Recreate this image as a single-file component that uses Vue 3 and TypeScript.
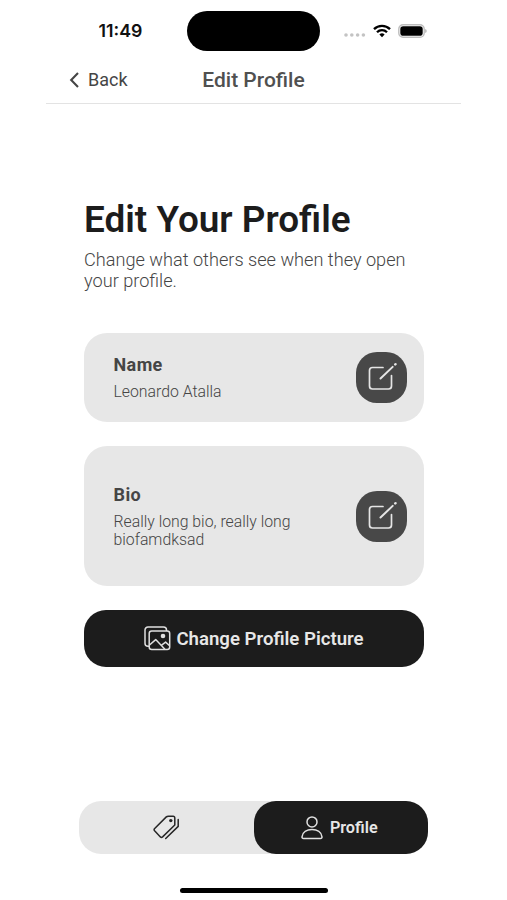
<script setup lang="ts">
interface Field {
  label: string
  value: string
  size: string
}

const fields: Field[] = [
  { label: 'Name', value: 'Leonardo Atalla', size: 'short' },
  { label: 'Bio', value: 'Really long bio, really long biofamdksad', size: 'tall' },
]
</script>

<template>
  <div class="screen">
    <header class="status">
      <div class="time">11:49</div>
      <div class="island"></div>
      <div class="indicators">
        <svg class="dots" width="22" height="4" viewBox="0 0 22 4" fill="#c3c3c3">
          <circle cx="2" cy="2" r="1.8" /><circle cx="7.8" cy="2" r="1.8" />
          <circle cx="13.6" cy="2" r="1.8" /><circle cx="19.4" cy="2" r="1.8" />
        </svg>
        <svg class="wifi" width="18" height="14" viewBox="0 0 18 14" fill="none" stroke="#000" stroke-width="2.3">
          <path d="M1 5.1a11.3 11.3 0 0 1 16 0" />
          <path d="M4 8.3a7 7 0 0 1 10 0" />
          <path d="M9 13.2 6.4 10.6a3.7 3.7 0 0 1 5.2 0z" fill="#000" stroke="none" />
        </svg>
        <svg class="battery" width="29" height="14" viewBox="0 0 29 14">
          <rect x=".8" y=".8" width="25.4" height="12.4" rx="4.3" fill="#fff" stroke="#bdbdbd" stroke-width="1.4" />
          <rect x="2.3" y="2.3" width="22.4" height="9.4" rx="2.8" />
          <path d="M27.4 5v4c1.5-.6 1.5-3.4 0-4z" fill="#999" />
        </svg>
      </div>
    </header>

    <nav class="navbar">
      <button class="back">
        <svg width="10" height="16" viewBox="0 0 10 16" fill="none" stroke="#454545" stroke-width="2.1">
          <path d="M9 1.1 2.2 8 9 14.900" />
        </svg>
        <span>Back</span>
      </button>
      <span class="nav-title">Edit Profile</span>
    </nav>

    <main class="content">
      <h1>Edit Your Profile</h1>
      <p class="intro">Change what others see when they open your profile.</p>

      <section v-for="field in fields" :key="field.label" class="card" :class="field.size">
        <div class="copy">
          <h2>{{ field.label }}</h2>
          <p>{{ field.value }}</p>
        </div>
        <button class="edit" :aria-label="field.label">
          <svg width="31" height="31" viewBox="0 0 31 31" fill="none" stroke="#e5e5e5" stroke-width="1.7" stroke-linecap="round" stroke-linejoin="round">
            <path d="M17 5.500H6.500a3 3 0 0 0-3 3V24a3 3 0 0 0 3 3H22.500a3 3 0 0 0 3-3V13.500" />
            <path d="M14.500 16.500 26.700 4.900" stroke-width="2" />
            <path d="m29.200 2.500.3-.3" stroke-width="2.400" />
          </svg>
        </button>
      </section>

      <button class="picture">
        <svg width="27" height="25" viewBox="0 0 27 25" fill="none" stroke="#e0e0e0" stroke-width="1.5" stroke-linejoin="round">
          <path d="M5.2 20.2H4a3 3 0 0 1-3-3V4a3 3 0 0 1 3-3h15.500a3 3 0 0 1 3 3v1" />
          <rect x="5.200" y="5" width="20.500" height="18.600" rx="2.500" />
          <path d="m5.500 19 6.200-5.400 9.200 9.700M17.300 19.300l4.300-3.200 4 3.600" />
          <circle cx="19" cy="10" r="2.300" fill="#e0e0e0" stroke="none" />
        </svg>
        <span>Change Profile Picture</span>
      </button>
    </main>

    <footer class="tabs">
      <button class="tab" aria-label="Tags">
        <svg width="27" height="26" viewBox="0 0 27 26" fill="none" stroke="#262626" stroke-width="1.500" stroke-linejoin="round" stroke-linecap="round">
          <path d="M13.300 1.900 1.700 13.500c-.8.800-.8 1.500-.1 2.300l5.800 6.100c.7.700 1.400.7 2.200 0L21.800 10V3.100c0-1.100-.6-1.800-1.700-1.800h-4.700c-.9 0-1.400 0-2.100.6z" />
          <path d="M25.200 4.500v6.900L12.700 23.500" />
          <circle cx="17.800" cy="5.600" r="1.700" fill="#262626" stroke="none" />
        </svg>
      </button>
      <button class="tab active">
        <svg width="22" height="24" viewBox="0 0 22 24" fill="none" stroke="#e0e0e0" stroke-width="1.500" stroke-linejoin="round">
          <circle cx="11" cy="5.900" r="5" />
          <path d="M1 20.800c.6-4.600 4.700-7.200 10-7.200s9.400 2.600 10 7.200c.1 1-.5 1.700-1.500 1.700h-17c-1 0-1.600-.7-1.500-1.700z" />
        </svg>
        <span>Profile</span>
      </button>
    </footer>
    <div class="home"></div>
  </div>
</template>

<style>
body {
  background: #fff;
}
</style>

<style scoped>
.screen {
  width: 415px;
  height: 900px;
  margin-left: 46px;
  display: flex;
  flex-direction: column;
  background: #fff;
  font-family: Roboto, sans-serif;
  color: #454545;
}
button {
  border: 0;
  padding: 0;
  background: none;
  font: inherit;
  color: inherit;
}
svg {
  display: block;
  flex: none;
}
h1, h2, p {
  margin: 0;
}
.status {
  height: 51px;
  padding-top: 11px;
  box-sizing: border-box;
  display: grid;
  grid-template-columns: 141px 133px 141px;
}
.time {
  padding-left: 52.5px;
  font: 600 17.8px/40px Inter, sans-serif;
  color: #111;
}
.island {
  height: 40px;
  border-radius: 20px;
  background: #000;
}
.indicators {
  display: flex;
  align-items: center;
  height: 39px;
  padding-left: 24px;
}
.dots {
  margin-top: 9px;
}
.wifi {
  margin-left: 6.5px;
}
.battery {
  margin-left: 7.5px;
}
.navbar {
  height: 53px;
  box-sizing: border-box;
  display: grid;
  grid-template-columns: 110px 195px 110px;
  align-items: center;
  padding-bottom: 3px;
  padding-top: 9px;
  border-bottom: 1px solid #e3e3e3;
}
.back {
  display: flex;
  align-items: center;
  gap: 9px;
  padding-left: 23px;
  font-size: 18px;
  line-height: 24px;
}
.nav-title {
  text-align: center;
  font-size: 21px;
  font-weight: 500;
  line-height: 24px;
  color: #505050;
}
.content {
  margin: 0 38px;
  width: 340px;
  display: flex;
  flex-direction: column;
}
h1 {
  margin-top: 94px;
  font-size: 36.9px;
  line-height: 44px;
  font-weight: 600;
  color: #1c1c1c;
  white-space: nowrap;
}
.intro {
  margin-top: 8px;
  font-size: 18.15px;
  line-height: 20.5px;
  font-weight: 300;
}
.card {
  display: flex;
  align-items: center;
  justify-content: space-between;
  box-sizing: border-box;
  padding: 0 17px 0 29.5px;
  background: #e7e7e7;
  border-radius: 23px;
}
.short {
  margin-top: 42px;
  height: 89px;
}
.tall {
  margin-top: 24px;
  height: 140px;
}
.copy {
  width: 190px;
}
h2 {
  font-size: 18px;
  line-height: 22px;
  font-weight: 700;
  letter-spacing: 0.4px;
}
.copy p {
  margin-top: 7px;
  font-size: 15.8px;
  line-height: 17.5px;
  font-weight: 300;
}
.edit {
  width: 51px;
  height: 51px;
  display: grid;
  place-items: center;
  border-radius: 21px;
  background: #484848;
}
.picture {
  margin-top: 24px;
  height: 57px;
  display: flex;
  align-items: center;
  justify-content: center;
  gap: 5px;
  border-radius: 22px;
  background: #1c1c1c;
  color: #e7e7e7;
  font-size: 18.6px;
  font-weight: 600;
}
.tabs {
  margin: 134px 33px 0;
  height: 53px;
  display: grid;
  grid-template-columns: 1fr 1fr;
  border-radius: 22px;
  background: #e7e7e7;
}
.tab {
  display: flex;
  align-items: center;
  justify-content: center;
  gap: 7px;
  border-radius: 22px;
}
.active {
  padding-right: 3px;
  background: #1c1c1c;
  color: #e7e7e7;
  font-size: 16.2px;
  font-weight: 600;
}
.home {
  width: 148px;
  height: 5px;
  margin: 34px 0 0 134px;
  border-radius: 3px;
  background: #000;
}
</style>
